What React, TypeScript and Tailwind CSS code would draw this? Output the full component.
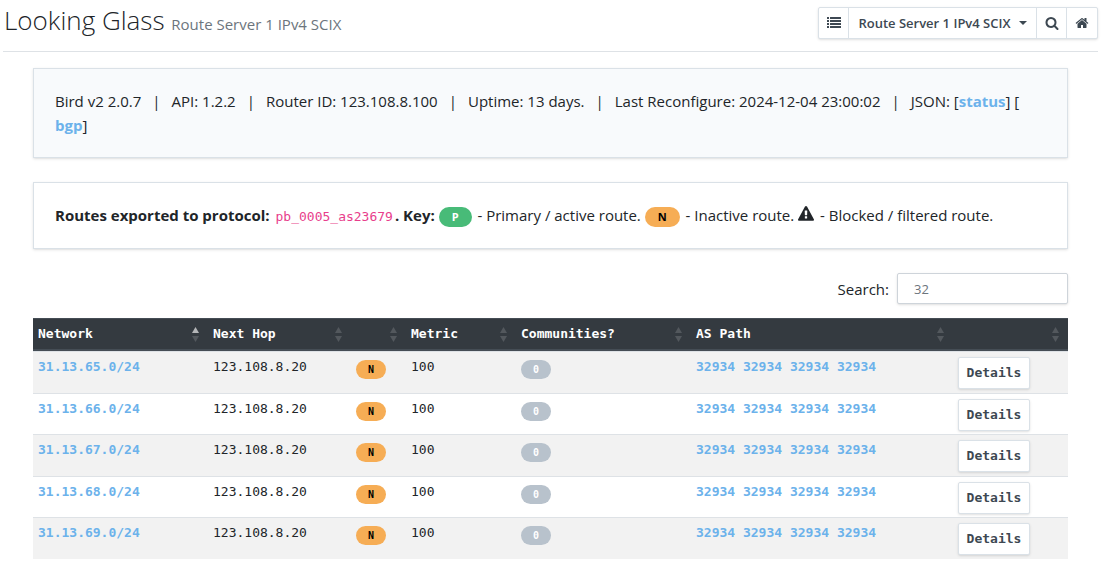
import React from "react";

const routes = ["31.13.65.0/24", "31.13.66.0/24", "31.13.67.0/24", "31.13.68.0/24", "31.13.69.0/24"];
const asPath = ["32934", "32934", "32934", "32934"];

const columns = [
  { label: "Network", width: "w-[175px]", sorted: true },
  { label: "Next Hop", width: "w-[143px]" },
  { label: "", width: "w-[55px]" },
  { label: "Metric", width: "w-[110px]" },
  { label: "Communities?", width: "w-[175px]" },
  { label: "AS Path", width: "w-[262px]" },
  { label: "", width: "w-[115px]" },
];

const linkClass = "font-bold text-[#6cb2eb]";
const cellClass = "border-t border-[#dee2e6] px-[5px]";
const keyBadgeClass = "mr-0.5 inline-block rounded-full px-[13px] align-middle text-[11px] leading-5 font-bold";
const cellBadgeClass = "block w-[30px] rounded-full text-center text-[10px] leading-[19px] font-bold";

function Icon({ d, className }: { d: string; className: string }) {
  return (
    <svg viewBox="0 0 1792 1792" fill="currentColor" aria-hidden="true" className={className}>
      <path d={d} />
    </svg>
  );
}

const listPath =
  "M32 1280h192q32 0 32 32v192q0 32-32 32h-192q-32 0-32-32v-192q0-32 32-32zM32 896h192q32 0 32 32v192q0 32-32 32h-192q-32 0-32-32v-192q0-32 32-32zM32 512h192q32 0 32 32v192q0 32-32 32h-192q-32 0-32-32v-192q0-32 32-32zM32 128h192q32 0 32 32v192q0 32-32 32h-192q-32 0-32-32v-192q0-32 32-32zM416 1280h1344q32 0 32 32v192q0 32-32 32h-1344q-32 0-32-32v-192q0-32 32-32zM416 896h1344q32 0 32 32v192q0 32-32 32h-1344q-32 0-32-32v-192q0-32 32-32zM416 512h1344q32 0 32 32v192q0 32-32 32h-1344q-32 0-32-32v-192q0-32 32-32zM416 128h1344q32 0 32 32v192q0 32-32 32h-1344q-32 0-32-32v-192q0-32 32-32z";
const searchPath =
  "M1216 832q0-185-131.5-316.5t-316.5-131.5-316.5 131.5-131.5 316.5 131.5 316.5 316.5 131.5 316.5-131.5 131.5-316.5zm512 832q0 52-38 90t-90 38q-54 0-90-38l-343-342q-179 124-399 124-143 0-273.5-55.5t-225-150-150-225-55.5-273.5 55.5-273.5 150-225 225-150 273.5-55.5 273.5 55.5 225 150 150 225 55.5 273.5q0 220-124 399l343 343q37 37 37 90z";
const homePath =
  "M1472 992v480q0 26-19 45t-45 19h-384v-384h-256v384h-384q-26 0-45-19t-19-45v-480q0-1 .5-3t.5-3l575-474 575 474q1 2 1 6zm223-69l-62 74q-8 9-21 11h-3q-13 0-21-7l-692-577-692 577q-12 8-24 7-13-2-21-11l-62-74q-8-10-7-23.5t11-21.5l719-599q32-26 76-26t76 26l244 204v-195q0-14 9-23t23-9h192q14 0 23 9t9 23v408l219 182q10 8 11 21.5t-7 23.5z";
const warningPath =
  "M1024 1375v-190q0-14-9.5-23.5t-22.5-9.5h-192q-13 0-22.5 9.5t-9.5 23.5v190q0 14 9.5 23.5t22.5 9.5h192q13 0 22.5-9.5t9.5-23.5zm-2-374l18-459q0-12-10-19-13-11-24-11h-220q-11 0-24 11-10 7-10 21l17 457q0 10 10 16.5t24 6.5h185q14 0 23.5-6.5t10.5-16.5zm-14-934l768 1408q35 63-2 126-17 29-46.5 46t-63.5 17h-1536q-34 0-63.5-17t-46.5-46q-37-63-2-126l768-1408q17-31 47-49t65-18 65 18 47 49z";

function Separator() {
  return <span className="mx-[11px]">|</span>;
}

function SortArrows({ sorted }: { sorted?: boolean }) {
  return (
    <svg viewBox="0 0 7 15" aria-hidden="true" className="h-[15px] w-[7px] shrink-0">
      <path d="M3.5 0 7 6H0z" fill={sorted ? "#b4b6b8" : "#53585d"} />
      <path d="M0 9h7L3.5 15z" fill="#53585d" />
    </svg>
  );
}

function Toolbar() {
  const item = "flex items-center justify-center";
  return (
    <div className="flex h-8 divide-x divide-[#dae1e7] rounded-xs border border-[#dae1e7] bg-white text-[#3d4852] shadow-sm">
      <button type="button" aria-label="List" className={`${item} w-[30px]`}>
        <Icon d={listPath} className="size-[14px]" />
      </button>
      <button type="button" className={`${item} w-[188px] gap-2 text-[13px] font-semibold`}>
        Route Server 1 IPv4 SCIX
        <svg viewBox="0 0 8 4" aria-hidden="true" className="h-1 w-2">
          <path d="M0 0h8L4 4z" fill="currentColor" />
        </svg>
      </button>
      <button type="button" aria-label="Search routes" className={`${item} w-[30px]`}>
        <Icon d={searchPath} className="size-[14px]" />
      </button>
      <a href="#home" aria-label="Home" className={`${item} w-[30px]`}>
        <Icon d={homePath} className="size-[14px]" />
      </a>
    </div>
  );
}

export default function App() {
  return (
    <div className="bg-white pr-[13px] pl-[3px] font-['Open_Sans','Noto_Sans',sans-serif] text-[15px] leading-6 text-[#212529]">
      <header className="flex h-[52px] items-start justify-between border-b border-[#dee2e6]">
        <h1 className="pl-px text-[26px] leading-10 font-light">
          Looking Glass <small className="text-[15px] font-normal text-[#6c757d]">Route Server 1 IPv4 SCIX</small>
        </h1>
        <div className="pt-[7px]">
          <Toolbar />
        </div>
      </header>

      <main className="px-[30px] pt-4">
        <section className="mb-6 border border-[#dae1e7] bg-[#f8fafc] px-[21px] py-5 shadow-sm">
          Bird v2 2.0.7
          <Separator />
          API: 1.2.2
          <Separator />
          Router ID: 123.108.8.100
          <Separator />
          Uptime: 13 days.
          <Separator />
          Last Reconfigure: 2024-12-04 23:00:02
          <Separator />
          JSON: [<a href="#status" className={linkClass}>status</a>] [<br />
          <a href="#bgp" className={linkClass}>bgp</a>]
        </section>

        <section className="mb-6 border border-[#dae1e7] bg-white px-[21px] pt-5 pb-[21px] shadow-sm">
          <strong>
            Routes exported to protocol:{" "}
            <code className="px-0.5 font-['DejaVu_Sans_Mono',monospace] text-[13px] leading-5 font-normal text-[#e83e8c]">
              pb_0005_as23679
            </code>
            . Key:{" "}
          </strong>
          <span className={`${keyBadgeClass} bg-[#48bb78] text-white`}>P</span>
          {" - Primary / active route. "}
          <span className={`${keyBadgeClass} bg-[#f6ad55] text-black`}>N</span>
          {" - Inactive route. "}
          <Icon d={warningPath} className="mr-0.5 inline-block size-4 align-[-1px]" />
          {" - Blocked / filtered route."}
        </section>

        <div className="mb-[14px] flex items-center justify-end gap-2">
          <label htmlFor="search">Search:</label>
          <input
            id="search"
            type="text"
            defaultValue="32"
            className="h-[31px] w-[171px] rounded-xs border border-[#ced4da] bg-white px-4 text-[13px] text-[#6c757d] shadow-sm"
          />
        </div>

        <table className="w-full table-fixed border-separate border-spacing-0 font-['DejaVu_Sans_Mono',monospace] text-[13px] leading-5">
          <thead className="bg-[#343a40] text-white">
            <tr className="h-[33px]">
              {columns.map((column, index) => (
                <th
                  key={index}
                  scope="col"
                  className={`${column.width} border-t border-b-2 border-[#454d55] px-[5px] text-left font-bold`}
                >
                  <div className="flex items-center justify-between pr-1">
                    <span>{column.label}</span>
                    <SortArrows sorted={column.sorted} />
                  </div>
                </th>
              ))}
            </tr>
          </thead>
          <tbody>
            {routes.map((network) => (
              <tr key={network} className="align-top odd:h-[42px] odd:bg-[#f2f2f2] even:h-[41px]">
                <td className={`${cellClass} pt-[5px]`}>
                  <a href="#network" className={linkClass}>{network}</a>
                </td>
                <td className={`${cellClass} pt-[5px]`}>123.108.8.20</td>
                <td className={`${cellClass} pt-2`}>
                  <span className={`${cellBadgeClass} bg-[#f6ad55] text-black`}>N</span>
                </td>
                <td className={`${cellClass} pt-[5px]`}>100</td>
                <td className={`${cellClass} pt-2`}>
                  <span className={`${cellBadgeClass} bg-[#b8c2cc] text-white`}>0</span>
                </td>
                <td className={`${cellClass} pt-[5px]`}>
                  {asPath.map((asn, index) => (
                    <React.Fragment key={index}>
                      <a href="#asn" className={linkClass}>{asn}</a>{" "}
                    </React.Fragment>
                  ))}
                </td>
                <td className={`${cellClass} pt-[5px]`}>
                  <button
                    type="button"
                    className="block h-8 w-[72px] rounded-xs border border-[#dae1e7] bg-white text-[13px] font-bold text-[#3d4852] shadow-sm"
                  >
                    Details
                  </button>
                </td>
              </tr>
            ))}
          </tbody>
        </table>
      </main>
    </div>
  );
}
